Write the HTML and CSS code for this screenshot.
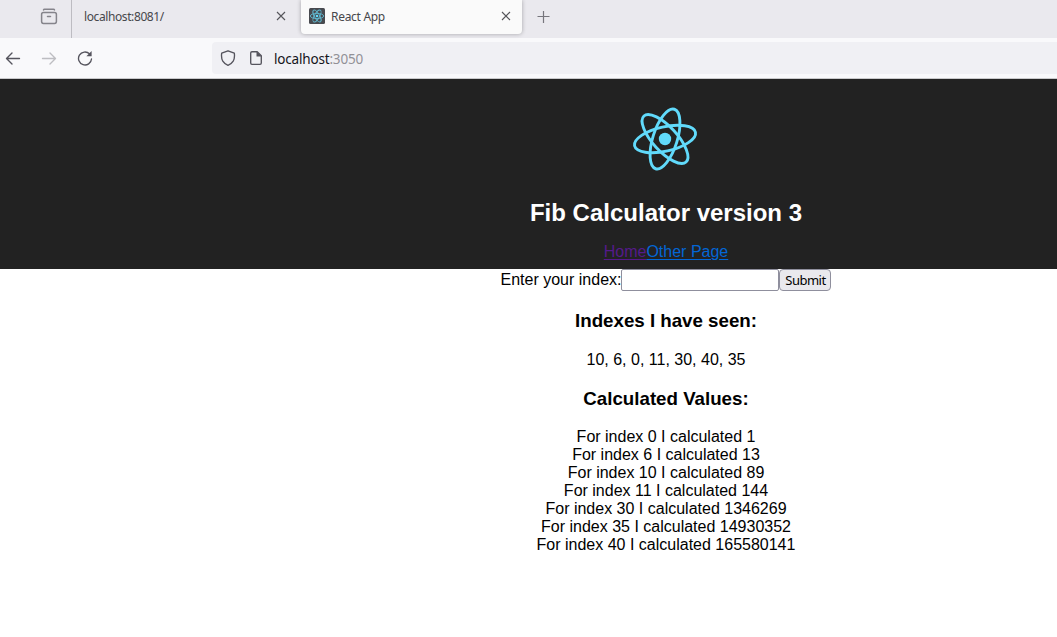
FILE: index.html
```html
<!DOCTYPE html>
<html lang="en">
<head>
<meta charset="utf-8">
<title>React App</title>
<link rel="stylesheet" href="styles.css">
</head>
<body>
<div class="browser">
  <div class="tabs">
    <div class="tab-manager">
      <svg width="18" height="18" viewBox="0 0 18 18" fill="none" stroke="#85848b" stroke-width="1.5" stroke-linecap="round"><path d="M3.500 1.900Q3.700 1.300 4.500 1.300h9q.8 0 1 .6"/><rect x="1.600" y="4.600" width="14.800" height="10.800" rx="1.800"/><path d="M7.500 8.500h3"/></svg>
    </div>
    <div class="tab">
      <span class="tab-title first-title">localhost:8081/</span>
      <svg class="close" width="10" height="10" viewBox="0 0 10 10"><path d="M1 1l8 8M9 1L1 9"/></svg>
    </div>
    <div class="tab active">
      <svg class="favicon" width="16" height="16" viewBox="0 0 16 16" fill="none" stroke="#61b9d0" stroke-width=".9"><rect width="16" height="16" rx="1.5" fill="#484a4f" stroke="none"/><g transform="translate(8 8)"><ellipse rx="6.700" ry="2.600"/><ellipse rx="6.700" ry="2.600" transform="rotate(60)"/><ellipse rx="6.700" ry="2.600" transform="rotate(120)"/><circle r="1.300" fill="#61dafb" stroke="none"/></g></svg>
      <span class="tab-title second-title">React App</span>
      <svg class="close" width="10" height="10" viewBox="0 0 10 10"><path d="M1 1l8 8M9 1L1 9"/></svg>
    </div>
    <svg class="new-tab" width="14" height="14" viewBox="0 0 14 14"><path d="M6.500 1v12M.500 6.500h12"/></svg>
  </div>
  <div class="toolbar">
    <svg class="nav" width="16" height="16" viewBox="0 0 16 16"><path d="M14.500 8.500H1.500M7 3L1.500 8.500 7 14"/></svg>
    <svg class="nav dim" width="16" height="16" viewBox="0 0 16 16"><path d="M1.500 8.500h13M9 3l5.500 5.500L9 14"/></svg>
    <svg class="nav" width="16" height="16" viewBox="0 0 16 16"><path d="M14.500 9A6.500 6.500 0 1 1 12.500 3.800"/><path class="solid" d="M14.600 1v5.200H9.400z"/></svg>
    <div class="address">
      <svg class="nav shield" width="16" height="16" viewBox="0 0 16 16"><path d="M8 .8L14.300 3.200Q15 8 13.200 11.200 11.500 14 8 15.300 4.500 14 2.800 11.200 1 8 1.700 3.200z"/></svg>
      <svg class="nav page-icon" width="14" height="16" viewBox="0 0 14 16"><path d="M3 1.700h5.200l4.100 4.100v7.200q0 1.300-1.300 1.300H3q-1.300 0-1.300-1.300V3Q1.700 1.700 3 1.700z"/><path class="solid" d="M7.500 1.200v5.300h5.200z"/></svg>
      <span class="url">localhost<span class="port">:3050</span></span>
    </div>
  </div>
</div>
<div class="app">
  <header class="header">
    <svg class="logo" width="80" height="80" viewBox="-40 -40 80 80" fill="none" stroke="#61dafb" stroke-width="2.900"><g transform="rotate(-12.500)"><ellipse rx="31.200" ry="12.200"/><ellipse rx="31.200" ry="12.200" transform="rotate(60)"/><ellipse rx="31.200" ry="12.200" transform="rotate(120)"/></g><circle r="6.200" fill="#61dafb" stroke="none"/></svg>
    <h1 class="title">Fib Calculator version 3</h1>
    <nav><a class="visited" href="#">Home</a><a class="link" href="#">Other Page</a></nav>
  </header>
  <form class="form"><label for="index">Enter your index:</label><input class="field" id="index"><button class="submit" type="button">Submit</button></form>
  <h3 class="heading seen">Indexes I have seen:</h3>
  <div>10, 6, 0, 11, 30, 40, 35</div>
  <h3 class="heading">Calculated Values:</h3>
  <div>For index 0 I calculated 1</div>
  <div>For index 6 I calculated 13</div>
  <div>For index 10 I calculated 89</div>
  <div>For index 11 I calculated 144</div>
  <div>For index 30 I calculated 1346269</div>
  <div>For index 35 I calculated 14930352</div>
  <div>For index 40 I calculated 165580141</div>
</div>
</body>
</html>
```
FILE: styles.css
```css
* { box-sizing: border-box; }
body { margin: 0; height: 637px; overflow: hidden; background: #fff; color: #000; font: 16px/18px "Liberation Sans", Arial, sans-serif; }
svg { display: block; flex: none; }
.browser { font-family: "Noto Sans", "Open Sans", sans-serif; }
.tabs { display: flex; height: 38px; background: #eae9ee; }
.tab-manager { width: 72px; padding: 8px 0 0 40px; border-right: 1px solid #bdbcc2; }
.tab { display: flex; align-items: center; width: 229px; height: 34px; padding: 0 15px 2px 12px; }
.tab.active { width: 221px; padding: 0 11px 2px 8px; background: #fafafa; border-radius: 0 0 4px 4px; box-shadow: 0 0 4px rgba(0, 0, 0, .3); }
.tab-title { flex: 1; font-size: 12px; line-height: 16px; color: #47474b; white-space: nowrap; padding-top: 2px; }
.first-title { letter-spacing: -.4px; }
.second-title { letter-spacing: -.3px; }
.favicon { margin-right: 6px; }
.close { fill: none; stroke: #55555a; stroke-width: 1.100; }
.new-tab { margin: 10px 0 0 15px; fill: none; stroke: #77767d; stroke-width: 1.200; }
.toolbar { display: flex; align-items: center; gap: 20px; height: 41px; padding: 0 0 1px 5px; background: #f9f9fb; border-bottom: 1px solid #c9c9cb; }
.nav { fill: none; stroke: #55545d; stroke-width: 1.350; stroke-linecap: round; stroke-linejoin: round; }
.dim { stroke: #bdbdc1; }
.solid { fill: #55545d; stroke: none; }
.address { display: flex; align-items: center; flex: 1; height: 32px; margin-left: 99px; padding-left: 8px; border-radius: 4px 0 0 4px; background: #f0f0f4; }
.page-icon { margin-left: 13px; }
.url { margin: 2px 0 0 11px; font-size: 13.500px; line-height: 20px; letter-spacing: -.18px; color: #15141a; }
.port { color: #929197; }
.app { padding-left: 275px; text-align: center; }
.header { height: 190px; margin-left: -275px; padding: 20px 0 0 275px; background: #222; color: #fff; }
.logo { margin: 0 auto; position: relative; left: -1px; }
.title { margin: 20px 0 16px; font-size: 24px; line-height: 28px; }
.visited, .link { text-underline-offset: 2px; }
.visited { color: #551a8b; }
.link { color: #0366d6; }
.form { display: flex; justify-content: center; height: 22px; line-height: 21px; }
.field { width: 158px; height: 22px; border: 1px solid #8f8f9d; border-radius: 2px; background: #fff; }
.submit { width: 52px; height: 22px; padding: 0; border: 1px solid #8f8f9d; border-radius: 4px; background: #e9e9ed; color: #000; font: 13px/20px "Noto Sans", sans-serif; letter-spacing: -.5px; }
.heading { margin: 19px 0; font-size: 18.720px; line-height: 21px; }
.seen { margin-bottom: 20px; }
```
